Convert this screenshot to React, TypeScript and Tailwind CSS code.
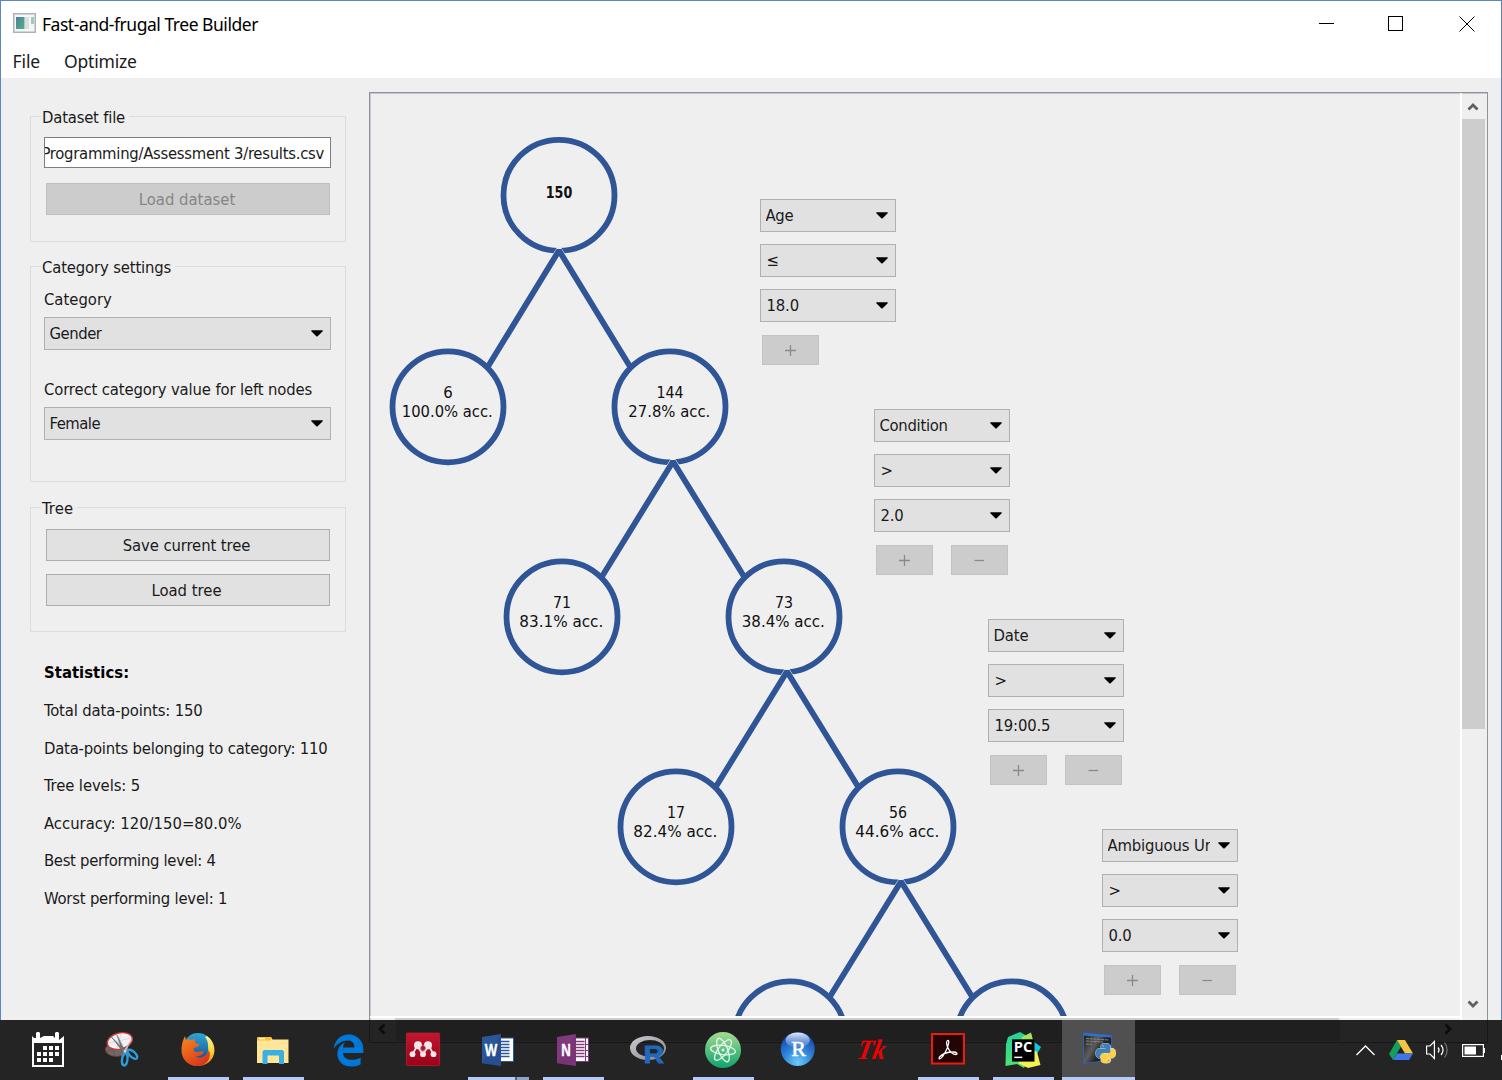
import React from "react";
import { FaEdgeLegacy } from "react-icons/fa6";

const UI = "font-['DejaVu_Sans_Condensed','DejaVu_Sans',sans-serif]";
const BLUE = "#2f5597";

const Caret = () => (
  <svg width="12" height="7" viewBox="0 0 12 7" className="shrink-0">
    <path d="M0.300 0.300H11.700V1.300L6.400 6.600H5.600L0.300 1.300Z" fill="#000" />
  </svg>
);

function Combo({ label, className = "", tracking = "" }: { label: string; className?: string; tracking?: string }) {
  return (
    <div className={`flex h-[33px] items-center border border-[#b0b0b0] bg-[#e1e1e1] pr-[7px] pl-[4.5px] ${className}`}>
      <span className={`mr-[8px] flex-1 overflow-hidden pt-px whitespace-nowrap ${tracking}`}>{label}</span>
      <Caret />
    </div>
  );
}

function Group({ title, className, legend, children }: { title: string; className: string; legend: string; children: React.ReactNode }) {
  return (
    <section className={`relative w-[316px] border border-[#dcdcdc] px-[13px] ${className}`}>
      <h2 className={`absolute -top-[9px] left-[10px] bg-[#efefef] pr-[4px] pl-[1px] leading-[20px] whitespace-nowrap ${legend}`}>{title}</h2>
      {children}
    </section>
  );
}

const Push = ({ label, tracking }: { label: string; tracking: string }) => (
  <button className="mx-[2px] flex h-[32px] items-center justify-center border border-[#adadad] bg-[#e1e1e1] pt-px pr-[3px]">
    <span className={`whitespace-nowrap ${tracking}`}>{label}</span>
  </button>
);

const stats = [
  { text: "Total data-points: 150", t: "tracking-[-0.13px]" },
  { text: "Data-points belonging to category: 110", t: "tracking-[-0.21px]" },
  { text: "Tree levels: 5", t: "tracking-[-0.1px]" },
  { text: "Accuracy: 120/150=80.0%", t: "tracking-[0px]" },
  { text: "Best performing level: 4", t: "tracking-[-0.31px]" },
  { text: "Worst performing level: 1", t: "tracking-[-0.21px]" },
];

const nodes = [
  { x: 559, y: 195.5, n: "150", w: 26.5, acc: "", aw: 0 },
  { x: 448, y: 407, n: "6", w: 9.5, acc: "100.0% acc.", aw: 91 },
  { x: 670, y: 407, n: "144", w: 27, acc: "27.8% acc.", aw: 82 },
  { x: 562, y: 617, n: "71", w: 18, acc: "83.1% acc.", aw: 84 },
  { x: 784, y: 617, n: "73", w: 18, acc: "38.4% acc.", aw: 83 },
  { x: 676, y: 827, n: "17", w: 18, acc: "82.4% acc.", aw: 84 },
  { x: 898, y: 827, n: "56", w: 18, acc: "44.6% acc.", aw: 84 },
  { x: 790, y: 1037, n: "", w: 0, acc: "", aw: 0 },
  { x: 1012, y: 1037, n: "", w: 0, acc: "", aw: 0 },
];

const Tree = () => (
  <svg width="1090" height="923" viewBox="370 93.5 1090 923" className="absolute top-0 left-0">
    {nodes.map((d) => (
      <circle key={`${d.x}-${d.y}`} cx={d.x} cy={d.y + 0.3} r="55.5" fill="none" stroke={BLUE} strokeWidth="5.8" />
    ))}
    {[[559, 251, 367], [673, 462, 577], [787, 672, 787], [901, 882, 997]].map(([x, y, b]) => (
      <g key={x}>
        <path d={`M${x - 6.5} ${y + 4}L${x - 2} ${y - 3}H${x + 2}L${x + 6.5} ${y + 4}Z`} fill="#efefef" />
        <path d={`M${x - 71} ${b}L${x} ${y}L${x + 71} ${b}`} fill="none" stroke={BLUE} strokeWidth="5.8" strokeLinejoin="bevel" />
      </g>
    ))}
    {nodes.filter((d) => d.n).map((d) => (
      <g key={d.n} textAnchor="middle" fontSize="16.500" fill="#111">
        <text x={d.x} y={d.acc ? d.y - 8.5 : d.y + 3} textLength={d.w} lengthAdjust="spacingAndGlyphs" fontWeight={d.acc ? 400 : 700}>{d.n}</text>
        {d.acc && <text x={d.x - 0.7} y={d.y + 10.5} textLength={d.aw} lengthAdjust="spacingAndGlyphs">{d.acc}</text>}
      </g>
    ))}
  </svg>
);

const Small = ({ sign }: { sign: "+" | "-" }) => (
  <button className="flex h-[30px] w-[57px] items-center justify-center border border-[#c3c3c3] bg-[#cccccc]">
    <svg width="11" height="11" viewBox="0 0 11 11" stroke="#8a8a8a" strokeWidth="1.300">
      <path d={sign === "+" ? "M0 5.500H11M5.500 0V11" : "M0.500 5.500H10"} />
    </svg>
  </button>
);

function Rule({ place, name, nameTracking, op, value, minus = true }: { place: string; name: string; nameTracking: string; op: string; value: string; minus?: boolean }) {
  return (
    <div className={`absolute flex w-[136px] flex-col gap-[12px] ${place}`}>
      <Combo label={name} tracking={nameTracking} />
      <Combo label={op} className="pl-[5.500px]" />
      <Combo label={value} className="pl-[5.500px]" tracking="tracking-[-0.15px]" />
      <div className="ml-[2px] flex gap-[18px] pt-[1px]">
        <Small sign="+" />
        {minus && <Small sign="-" />}
      </div>
    </div>
  );
}

const Chevron = ({ d, c }: { d: string; c: string }) => (
  <svg width="12" height="12" viewBox="0 0 12 12" fill="none" stroke={c} strokeWidth="2.800"><path d={d} /></svg>
);

const Icon = ({ children }: { children: React.ReactNode }) => (
  <svg width="40" height="40" viewBox="0 0 40 40" className="overflow-visible">{children}</svg>
);

const CalendarIcon = () => (
  <Icon>
    <path fillRule="evenodd" fill="#fff" d="M4 6L6 8H8V3L9 2H11L12 3V8L16 6H25L27 8V3L28 2H30L31 3V10L36 6V37H4ZM6 13V35H34V13Z" />
    <path fill="#fff" d="M15 16h4v4h-4zM21 16h4v4h-4zM27 16h4v4h-4zM9 22h4v4h-4zM15 22h4v4h-4zM21 22h4v4h-4zM27 22h4v4h-4zM9 28h4v4h-4zM15 28h4v4h-4zM21 28h4v4h-4z" />
  </Icon>
);

const SnipIcon = () => (
  <Icon>
    <ellipse cx="13.500" cy="19.500" rx="11" ry="6.800" fill="#6f6867" stroke="#8d4340" strokeWidth="0.900" />
    <path d="M4 21L22 17M8 15L12 25" stroke="#555" strokeWidth="0.800" />
    <ellipse cx="16.800" cy="11" rx="12.800" ry="8" fill="#f1f1f3" stroke="#c8393b" strokeWidth="1.400" transform="rotate(-14 17 11)" />
    <path d="M6 13L28 8M18 4L14 18" stroke="#d3d5d9" strokeWidth="0.800" />
    <path d="M8 6.500L22.500 21L20.500 22.500ZM14 5L22 21L19.500 22Z" fill="#777b80" stroke="#5d6064" strokeWidth="0.500" />
    <path d="M29 8L20.500 21L23 22Z" fill="#b9bdc1" />
    <ellipse cx="21.800" cy="29.500" rx="2.700" ry="6" fill="none" stroke="#2c9bd6" strokeWidth="2.400" transform="rotate(8 22 29)" />
    <ellipse cx="29.500" cy="24.300" rx="6" ry="2.800" fill="none" stroke="#2c9bd6" strokeWidth="2.400" transform="rotate(42 29.500 24.300)" />
    <circle cx="22" cy="21.500" r="1.300" fill="#d8dadd" />
  </Icon>
);

const FirefoxIcon = () => (
  <Icon>
    <defs>
      <linearGradient id="ffo" x1="0" y1="0" x2="0.600" y2="1"><stop offset="0" stopColor="#f58a1f" /><stop offset="0.600" stopColor="#e8591c" /><stop offset="1" stopColor="#d5381d" /></linearGradient>
      <linearGradient id="ffb" x1="0" y1="0" x2="0" y2="1"><stop offset="0" stopColor="#2fa5d5" /><stop offset="1" stopColor="#0d4a8c" /></linearGradient>
      <linearGradient id="ffy" x1="0" y1="0" x2="0" y2="1"><stop offset="0" stopColor="#fff1a0" /><stop offset="0.500" stopColor="#fbd435" /><stop offset="1" stopColor="#ee7a1f" /></linearGradient>
    </defs>
    <circle cx="20" cy="18" r="15" fill="url(#ffb)" />
    <path d="M29 6C37 11 39 23 33 30C28 36 20 37 14 35C24 33 32 26 30 16C30 12 29 9 27 7Z" fill="url(#ffy)" />
    <path d="M7 6L8 10C10 9 12 9 13 10L17 9C16 11 17 13 20 14C22 14 22 16 19 17L16 18C15 20 16 22 19 22C22 22 24 20 26 22C24 26 20 27 17 26C21 29 28 28 31 20C34 28 29 36 19 36C10 36 3 29 3.500 19C4 13 5 10 7 6Z" fill="url(#ffo)" />
  </Icon>
);

const FolderIcon = () => (
  <Icon>
    <path d="M4 8L5 7H18L19.500 9.500H35.500V33H4Z" fill="#ffe698" />
    <path d="M4 8L5 7H18L18.500 9L17 10.500H4Z" fill="#f8c32b" />
    <path d="M6 8.200H12V9.300H6Z" fill="#fff" />
    <path d="M9.500 34V21.500L11 20H29.500L31 21.500V34H26V25.500H14.500V34Z" fill="#38b0e5" />
  </Icon>
);

const MendeleyIcon = () => (
  <Icon>
    <defs><linearGradient id="men" x1="0" y1="0" x2="0" y2="1"><stop offset="0" stopColor="#c4162f" /><stop offset="1" stopColor="#9c0019" /></linearGradient></defs>
    <rect x="3.400" y="3" width="33.200" height="32.600" rx="0.800" fill="url(#men)" stroke="#b72035" strokeWidth="0.800" />
    <path d="M9.500 24.500L14 16L19.800 24L26 16L30.500 24.500" fill="none" stroke="#ecdfe1" strokeWidth="1.800" />
    <g fill="#f1e8e9"><circle cx="15" cy="15.300" r="4" /><circle cx="25" cy="15.300" r="4" /><circle cx="9.500" cy="24.200" r="2.900" /><circle cx="20" cy="24.200" r="2.900" /><circle cx="30.500" cy="24.200" r="2.900" /></g>
    <circle cx="20" cy="18" r="2.500" fill="#a61b32" stroke="#d4949e" strokeWidth="0.600" />
  </Icon>
);

const OfficeIcon = ({ letter, c, d, tabs }: { letter: string; c: string; d: string; tabs?: boolean }) => (
  <Icon>
    <rect x="22" y="8" width="13.500" height="23.500" fill="#fff" stroke={c} strokeWidth="1" />
    <path d="M23 11.500H31.500M23 14.500H31.500M23 17.500H31.500M23 20.500H31.500M23 23.500H31.500M23 26.500H31.500" stroke={c} strokeWidth="1.300" />
    {tabs && <path d="M32.500 8V32M32.500 14.500H36M32.500 20.500H36M32.500 26.500H36" stroke={c} strokeWidth="1.100" />}
    <path d="M4 7L23 4V36L4 33.300Z" fill={c} />
    <path d="M4 33.300L23 4V36Z" fill={d} opacity="0.300" />
    <text x="13" y="26" textAnchor="middle" fontSize="16" fontWeight="700" fontFamily="Open Sans, sans-serif" fill="#fff" stroke="#fff" strokeWidth="0.300" textLength={letter === "W" ? 12.5 : 10} lengthAdjust="spacingAndGlyphs">{letter}</text>
  </Icon>
);

const RIcon = () => (
  <Icon>
    <defs><linearGradient id="rg" x1="0" y1="0" x2="1" y2="1"><stop offset="0" stopColor="#c9cbd1" /><stop offset="1" stopColor="#85878d" /></linearGradient></defs>
    <path fillRule="evenodd" d="M2 18A18 12 0 1 1 38 18A18 12 0 1 1 2 18ZM8 18.500A14 8.500 0 1 0 36 18.500A14 8.500 0 1 0 8 18.500Z" fill="url(#rg)" />
    <text x="15.500" y="33" fontSize="24" fontWeight="700" fontFamily="Liberation Sans, sans-serif" fill="#2268bd" stroke="#2268bd" strokeWidth="0.800" textLength="20.500" lengthAdjust="spacingAndGlyphs">R</text>
  </Icon>
);

const AtomIcon = () => (
  <Icon>
    <defs><linearGradient id="atm" x1="0" y1="0" x2="0" y2="1"><stop offset="0" stopColor="#a3dc90" /><stop offset="1" stopColor="#0fa36d" /></linearGradient></defs>
    <circle cx="20" cy="20" r="18" fill="url(#atm)" />
    <g fill="none" stroke="#e6f7ec" strokeWidth="1.300">
      <ellipse cx="20" cy="20" rx="12.500" ry="4.600" transform="rotate(8 20 20)" />
      <ellipse cx="20" cy="20" rx="12.500" ry="4.600" transform="rotate(68 20 20)" />
      <ellipse cx="20" cy="20" rx="12.500" ry="4.600" transform="rotate(128 20 20)" />
    </g>
    <circle cx="20" cy="20" r="1.500" fill="#fff" />
  </Icon>
);

const RStudioIcon = () => (
  <Icon>
    <defs>
      <radialGradient id="rs" cx="0.500" cy="0.900" r="0.850"><stop offset="0" stopColor="#6ccdf8" /><stop offset="0.500" stopColor="#2f83d8" /><stop offset="1" stopColor="#1644a8" /></radialGradient>
      <linearGradient id="rsh" x1="0" y1="0" x2="0" y2="1"><stop offset="0" stopColor="#e5edfb" /><stop offset="1" stopColor="#7ba3e2" stopOpacity="0.350" /></linearGradient>
    </defs>
    <circle cx="19.700" cy="19" r="17" fill="url(#rs)" />
    <ellipse cx="19.700" cy="10" rx="12" ry="7.500" fill="url(#rsh)" />
    <text x="20.500" y="25.500" textAnchor="middle" fontSize="22" fontFamily="Liberation Serif, serif" fill="#fff" stroke="#fff" strokeWidth="0.600">R</text>
  </Icon>
);

const TkIcon = () => (
  <Icon>
    <text x="4.500" y="29" fontSize="28" fontWeight="900" fontStyle="italic" fontFamily="Liberation Serif, serif" fill="#f00000" textLength="28" lengthAdjust="spacingAndGlyphs" transform="translate(4.500 0) skewX(-12)">Tk</text>
  </Icon>
);

const AcrobatIcon = () => (
  <Icon>
    <rect x="4" y="4" width="32" height="29.500" fill="#240405" stroke="#ec1c0c" strokeWidth="2" />
    <path d="M19.500 10.500C18 11 18.500 15 20 18C22 22 25 24.500 28 24.500C30 24.300 29 22 25.500 22C20 22 14 24 11.500 27C10 29.500 12.500 29.500 14.500 26.500C17 23 20 17 20.700 13C21 11 20.500 10.200 19.500 10.500Z" fill="none" stroke="#fff" strokeWidth="1.300" />
  </Icon>
);

const PyCharmIcon = () => (
  <Icon>
    <defs><linearGradient id="pcg" x1="0" y1="0" x2="0" y2="1"><stop offset="0" stopColor="#23d19b" /><stop offset="1" stopColor="#4fe372" /></linearGradient></defs>
    <path d="M3 14L5 7L17 2L24 6V32L21 38L14 34L2.500 36Z" fill="url(#pcg)" />
    <path d="M19 7L28 2.500L30 10H18Z" fill="#a6e35d" />
    <path d="M30 11L38 17L34 24L29 22Z" fill="#14c5dd" />
    <path d="M30 20L34 22L37.500 35L25 38L15 33L20 28Z" fill="#f4f153" />
    <rect x="9" y="9.300" width="22.500" height="22.300" fill="#000" />
    <text x="10.800" y="22" fontSize="14" fontWeight="700" fontFamily="Open Sans, sans-serif" fill="#fff" textLength="18.500" lengthAdjust="spacingAndGlyphs">PC</text>
    <rect x="11.300" y="26.600" width="8" height="1.500" fill="#fff" />
  </Icon>
);

const SNAKE = "M14.25.18l.9.2.73.26.59.3.45.32.34.34.25.34.16.33.1.3.04.26.02.2-.01.13V8.5l-.05.63-.13.55-.21.46-.26.38-.3.31-.33.25-.35.19-.35.14-.33.1-.3.07-.26.04-.21.02H8.77l-.69.05-.59.14-.5.22-.41.27-.33.32-.27.35-.2.36-.15.37-.1.35-.07.32-.04.27-.02.21v3.06H3.17l-.21-.03-.28-.07-.32-.12-.35-.18-.36-.26-.36-.36-.35-.46-.32-.59-.28-.73-.21-.88-.14-1.05-.05-1.23.06-1.22.16-1.04.24-.87.32-.71.36-.57.4-.44.42-.33.42-.24.4-.16.36-.1.32-.05.24-.01h.16l.06.01h8.16v-.83H6.18l-.01-2.75-.02-.37.05-.34.11-.31.17-.28.25-.26.31-.23.38-.2.44-.18.51-.15.58-.12.64-.1.71-.06.77-.04.84-.02 1.27.05zm-6.3 1.98l-.23.33-.08.41.08.41.23.34.33.22.41.09.41-.09.33-.22.23-.34.08-.41-.08-.41-.23-.33-.33-.22-.41-.09-.41.09z";

const PythonIcon = () => (
  <Icon>
    <defs><linearGradient id="scr" x1="0" y1="0" x2="1" y2="0.600"><stop offset="0" stopColor="#1a1a1a" /><stop offset="0.450" stopColor="#5d5d5d" /><stop offset="0.700" stopColor="#222" /></linearGradient></defs>
    <path d="M5.500 3L33.500 5.500V30L5.500 33.500Z" fill="url(#scr)" stroke="#2b63bb" strokeWidth="0.900" />
    <path d="M5.500 3L33.500 5.500V7.500L5.500 5.500Z" fill="#2f6fd8" />
    <path d="M8 8.500L31 10M8 11L25 12M8 14L14 14.300" stroke="#8d8d84" strokeWidth="0.900" strokeDasharray="3 0.800" />
    <g transform="translate(18 13.500) scale(0.810)">
      <path d={SNAKE} fill="#3f80b8" stroke="#e8eef3" strokeWidth="1.200" paintOrder="stroke" />
      <path d={SNAKE} fill="#ffcf45" stroke="#f5f1e2" strokeWidth="1.200" paintOrder="stroke" transform="rotate(180 12 12)" />
    </g>
  </Icon>
);

const apps: { id: string; icon: React.ReactNode; open?: boolean; active?: boolean; stacked?: boolean }[] = [
  { id: "calendar", icon: <CalendarIcon /> },
  { id: "snip", icon: <SnipIcon /> },
  { id: "firefox", icon: <FirefoxIcon />, open: true },
  { id: "explorer", icon: <FolderIcon />, open: true },
  { id: "edge", icon: <FaEdgeLegacy size={33} color="#0078d7" /> },
  { id: "mendeley", icon: <MendeleyIcon /> },
  { id: "word", icon: <OfficeIcon letter="W" c="#2b579a" d="#1b3f7d" />, open: true, stacked: true },
  { id: "onenote", icon: <OfficeIcon letter="N" c="#80397b" d="#662a63" tabs />, open: true },
  { id: "r", icon: <RIcon /> },
  { id: "atom", icon: <AtomIcon />, open: true },
  { id: "rstudio", icon: <RStudioIcon /> },
  { id: "tk", icon: <TkIcon /> },
  { id: "acrobat", icon: <AcrobatIcon />, open: true },
  { id: "pycharm", icon: <PyCharmIcon />, open: true },
  { id: "python", icon: <PythonIcon />, open: true, active: true },
];

function Taskbar() {
  return (
    <footer className="relative flex h-[60px] shrink-0 justify-between bg-[#242424] pl-[10.500px]">
      <div className="absolute top-0 left-[369px] h-[23px] w-[1119px] border-r border-b border-l border-[#171717]">
        <div className="absolute top-0 left-[26px] h-[21px] w-[944px] bg-[#1f1f1f]" />
        <div className="absolute top-[3px] left-[6px]"><Chevron d="M8.500 1.500L4 6L8.500 10.500" c="#0c0c0c" /></div>
        <div className="absolute top-[3px] right-[33px]"><Chevron d="M3.500 1.500L8 6L3.500 10.500" c="#0c0c0c" /></div>
      </div>
      <nav className="relative flex">
        {apps.map((a) => (
          <div key={a.id} className="relative flex h-[60px] w-[75px] items-center justify-center">
            {a.active && <div className="absolute inset-y-0 right-[0.500px] left-[1.500px] bg-[#505050]" />}
            <div className="relative">{a.icon}</div>
            {a.open && (
              <div className={`absolute bottom-0 flex h-[3px] bg-[#b3cbfb] ${a.active ? "right-[0.500px] left-[1.500px]" : "left-[7.500px] w-[61px]"}`}>
                {a.stacked && <div className="ml-auto w-[14px] border-l-2 border-[#56627b] bg-[#8fa3cb]" />}
              </div>
            )}
          </div>
        ))}
      </nav>
      <div className="relative flex items-center pr-[17px]">
        <svg width="19" height="11" viewBox="0 0 19 11" className="mr-[14px]" fill="none" stroke="#fff" strokeWidth="1.300"><path d="M0.500 10L9.500 1L18.500 10" /></svg>
        <svg width="24" height="20" viewBox="0 0 24 20" className="mr-[13px]">
          <path d="M8 0L0 14L4 20L12 6.500Z" fill="#12a05c" />
          <path d="M8 0H16L24 13.500H16Z" fill="#f6c445" />
          <path d="M8 13.500H24L20 20H4Z" fill="#3b77e5" />
        </svg>
        <svg width="23" height="20" viewBox="0 0 23 20" className="mr-[13px]" fill="none" stroke="#fff" strokeWidth="1.200">
          <path d="M0.600 6H4L8.400 1.500V18.500L4 14H0.600Z" />
          <path d="M12 7.500C13.300 9 13.300 11 12 12.500M15 5C17.500 8 17.500 12 15 15" />
          <path d="M18.500 2.500C22 7 22 13 18.500 17.500" stroke="#777" />
        </svg>
        <svg width="23" height="13" viewBox="0 0 23 13"><rect x="0.600" y="0.600" width="20.800" height="11.800" fill="none" stroke="#fff" strokeWidth="1.200" /><path d="M2.500 2.500H14V10.500H2.500ZM21.500 4H23V9H21.500Z" fill="#fff" /></svg>
      </div>
      <div className="absolute top-[35px] right-0 h-[5px] w-[1px] bg-white" />
    </footer>
  );
}

export default function App() {
  return (
    <div className={`flex h-[1080px] w-[1502px] flex-col overflow-hidden text-[16.5px] leading-[24px] text-[#1a1a1a] ${UI}`}>
      <div className="flex h-[1020px] shrink-0 flex-col border-x border-t border-[#5b84cf] bg-[#efefef]">
        <header className="flex h-[41px] shrink-0 items-center bg-white pl-[12px]">
          <svg width="23" height="20" viewBox="0 0 23 20" className="mt-[2px] mr-[6px]">
            <defs><linearGradient id="app" x1="0" y1="0" x2="1" y2="1"><stop offset="0" stopColor="#4c7ba8" /><stop offset="1" stopColor="#58b27b" /></linearGradient></defs>
            <rect x="0.750" y="0.750" width="21.500" height="18.500" fill="#f5f6f7" stroke="#aeb3b9" strokeWidth="1.500" />
            <rect x="3" y="4" width="8.500" height="12" fill="url(#app)" />
            <rect x="12" y="4" width="4" height="12" fill="#dcdee0" />
            <rect x="18" y="4" width="3" height="7" fill="#9fcdb9" />
          </svg>
          <h1 className="pt-[5px] font-['Noto_Sans',sans-serif] text-[17.500px] tracking-[-0.470px] whitespace-nowrap text-black">Fast-and-frugal Tree Builder</h1>
          <svg width="156" height="16" viewBox="0 0 156 16" className="mr-[26px] mb-[-5px] ml-auto" fill="none" stroke="#000" strokeWidth="1">
            <path d="M0 7.500H15" /><rect x="69.500" y="0.500" width="14" height="14" /><path d="M140.500 0.500L155.500 15.500M155.500 0.500L140.500 15.500" />
          </svg>
        </header>
        <nav className="flex h-[36px] shrink-0 items-center gap-[24px] bg-white pt-[2px] pl-[11.500px] font-['Noto_Sans',sans-serif] text-[17.500px]">
          <span className="tracking-[-0.100px]">File</span>
          <span className="tracking-[-0.200px]">Optimize</span>
        </nav>
        <main className="flex flex-1">
          <aside className="flex w-[368px] flex-col pt-[38px] pl-[29px] leading-[20px]">
            <Group title="Dataset file" className="h-[126px] pt-[19.500px]" legend="tracking-[-0.200px]">
              <div className="flex h-[31px] w-[287px] items-center border border-[#7e7e7e] bg-white pt-[3px] pr-[6px]">
                <div className="flex flex-1 justify-end overflow-hidden">
                  <span className="tracking-[-0.270px] whitespace-nowrap">Programming/Assessment 3/results.csv</span>
                </div>
              </div>
              <button className="mx-[2px] mt-[15px] flex h-[32px] w-[284px] items-center justify-center border border-[#c0c0c0] bg-[#cccccc] pt-[2px] pr-[2px] text-[#858585]">Load dataset</button>
            </Group>
            <Group title="Category settings" className="mt-[24px] h-[216px] pt-[23px]" legend="tracking-[-0.150px]">
              <div>Category</div>
              <Combo label="Gender" className="mt-[7px] w-[287px]" tracking="tracking-[-0.450px]" />
              <div className="mt-[30px] tracking-[-0.130px] whitespace-nowrap">Correct category value for left nodes</div>
              <Combo label="Female" className="mt-[7px] w-[287px]" tracking="tracking-[-0.500px]" />
            </Group>
            <Group title="Tree" className="mt-[25px] flex h-[125px] flex-col gap-[13px] pt-[21px]" legend="tracking-[0.200px]">
              <Push label="Save current tree" tracking="tracking-[-0.100px]" />
              <Push label="Load tree" tracking="tracking-[0px]" />
            </Group>
            <div className="mt-[31px] pl-[14px] whitespace-nowrap">
              <h2 className="mb-[18px] font-bold tracking-[0.050px] text-black">Statistics:</h2>
              <div className="flex flex-col gap-[17.500px]">
                {stats.map((s) => <div key={s.text}><span className={s.t}>{s.text}</span></div>)}
              </div>
            </div>
          </aside>
          <section className="mt-[14px] flex h-[928px] w-[1119px] overflow-hidden border-x border-t border-[#8d939b] shadow-[inset_1px_1px_0_#c4c8cc]">
            <div className="flex flex-1 flex-col">
              <div className="relative h-[923px] shrink-0 overflow-hidden">
                <Tree />
                <Rule place="left-[390px] top-[106px]" name="Age" nameTracking="tracking-[-0.300px]" op="≤" value="18.0" minus={false} />
                <Rule place="left-[504px] top-[316px]" name="Condition" nameTracking="tracking-[-0.300px]" op=">" value="2.0" />
                <Rule place="left-[618px] top-[526px]" name="Date" nameTracking="tracking-[-0.150px]" op=">" value="19:00.5" />
                <Rule place="left-[732px] top-[736px]" name="Ambiguous Urn" nameTracking="tracking-[-0.150px]" op=">" value="0.0" />
              </div>
              <div className="h-[2px] bg-white" />
              <div className="ml-[25px] h-[3px] w-[944px] bg-[#cdcdcd]" />
            </div>
            <div className="flex w-[27px] flex-col items-start border-l-2 border-white">
              <div className="ml-[5px] flex h-[26px] items-center pt-px"><Chevron d="M1.500 8.500L6 4L10.500 8.500" c="#606060" /></div>
              <div className="h-[610px] w-[23px] bg-[#cdcdcd]" />
              <div className="mt-[269px] ml-[5px]"><Chevron d="M1.500 3.500L6 8L10.500 3.500" c="#606060" /></div>
            </div>
          </section>
        </main>
      </div>
      <Taskbar />
    </div>
  );
}
